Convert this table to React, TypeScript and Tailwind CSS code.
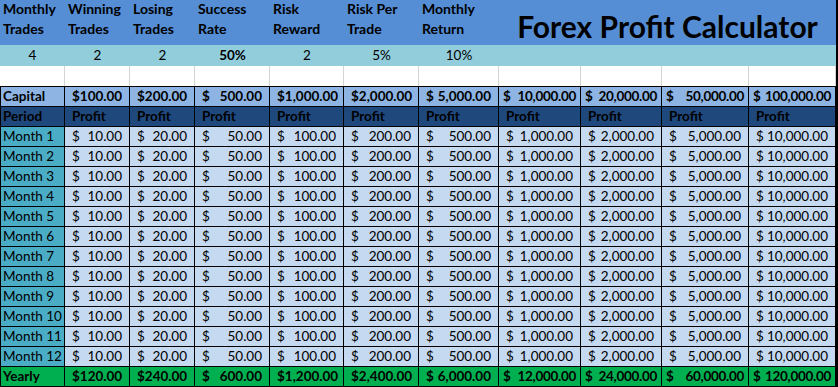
import React from 'react';

const grid = 'grid grid-cols-[65px_65px_65px_75px_74px_75px_80px_82px_81px_87px_87px]';

const capitals = [100, 200, 500, 1000, 2000, 5000, 10000, 20000, 50000, 100000];
const months = Array.from({ length: 12 }, (_, i) => `Month ${i + 1}`);

const fmt = (n: number) =>
  n.toLocaleString('en-US', { minimumFractionDigits: 2, maximumFractionDigits: 2 });

const headers = [
  ['Monthly', 'Trades'],
  ['Winning', 'Trades'],
  ['Losing', 'Trades'],
  ['Success', 'Rate'],
  ['Risk', 'Reward'],
  ['Risk Per', 'Trade'],
  ['Monthly', 'Return'],
];

const values = [
  { v: '4', bold: false },
  { v: '2', bold: false },
  { v: '2', bold: false },
  { v: '50%', bold: true },
  { v: '2', bold: false },
  { v: '5%', bold: false },
  { v: '10%', bold: false },
];

const Money: React.FC<{ n: number; bold?: boolean; bg: string }> = ({ n, bold, bg }) => {
  const s = fmt(n);
  // long bold totals get a tighter gutter so they stay inside the cell
  const tight = bold && s.length >= 9;
  return (
    <div
      className={`flex items-center justify-between whitespace-nowrap border-r border-b border-black ${bg} ${
        bold ? 'font-bold' : ''
      } ${tight ? 'px-[4px] tracking-[-0.3px]' : 'px-[7px]'}`}
    >
      <span>$</span>
      <span>{s}</span>
    </div>
  );
};

const App: React.FC = () => {
  return (
    <div
      className="w-[838px] h-[387px] overflow-hidden bg-white border-r-2 border-black text-[13.5px] text-black leading-none"
      style={{ fontFamily: 'Lato, "Open Sans", sans-serif' }}
    >
      {/* header labels + title */}
      <div className={`${grid} h-[45px] bg-[#558ed5]`}>
        {headers.map(([a, b], i) => (
          <div key={i} className="flex flex-col justify-between pl-[3px] pt-[2px] pb-[9px] font-bold text-[14px]">
            <span>{a}</span>
            <span>{b}</span>
          </div>
        ))}
        <div className="col-span-4 flex items-center justify-center pt-[6px] text-[30px] font-bold">
          Forex Profit Calculator
        </div>
      </div>

      {/* input values */}
      <div className={`${grid} h-[21px] bg-[#92cddc]`}>
        {values.map((c, i) => (
          <div key={i} className={`flex items-center justify-center ${c.bold ? 'font-bold' : ''}`}>
            {c.v}
          </div>
        ))}
      </div>

      {/* blank spacer row */}
      <div className={`${grid} h-[20px]`}>
        {Array.from({ length: 11 }).map((_, i) => (
          <div key={i} className="border-r border-[#d4d4d4]" />
        ))}
      </div>

      {/* profit table */}
      <div className="border-t border-black">
        <div className={`${grid} h-[20px]`}>
          <div className="flex items-center pl-[2px] border-l border-r border-b border-black bg-[#8db4e2] font-bold">
            Capital
          </div>
          {capitals.map((c) => (
            <Money key={c} n={c} bold bg="bg-[#8db4e2]" />
          ))}
        </div>

        <div className={`${grid} h-[20px] bg-[#1f497d] font-bold text-black`}>
          <div className="flex items-center pl-[2px] border-l border-r border-b border-black">Period</div>
          {capitals.map((c) => (
            <div key={c} className="flex items-center pl-[7px] border-r border-b border-black">
              Profit
            </div>
          ))}
        </div>

        {months.map((m) => (
          <div key={m} className={`${grid} h-[20px]`}>
            <div className="flex items-center whitespace-nowrap pl-[2px] border-l border-r border-b border-black bg-[#4bacc6]">
              {m}
            </div>
            {capitals.map((c) => (
              <Money key={c} n={c * 0.1} bg="bg-[#c5d9f1]" />
            ))}
          </div>
        ))}

        <div className={`${grid} h-[20px]`}>
          <div className="flex items-center pl-[2px] border-l border-r border-b border-black bg-[#00b050] font-bold">
            Yearly
          </div>
          {capitals.map((c) => (
            <Money key={c} n={c * 1.2} bold bg="bg-[#00b050]" />
          ))}
        </div>
      </div>
    </div>
  );
};

export default App;
